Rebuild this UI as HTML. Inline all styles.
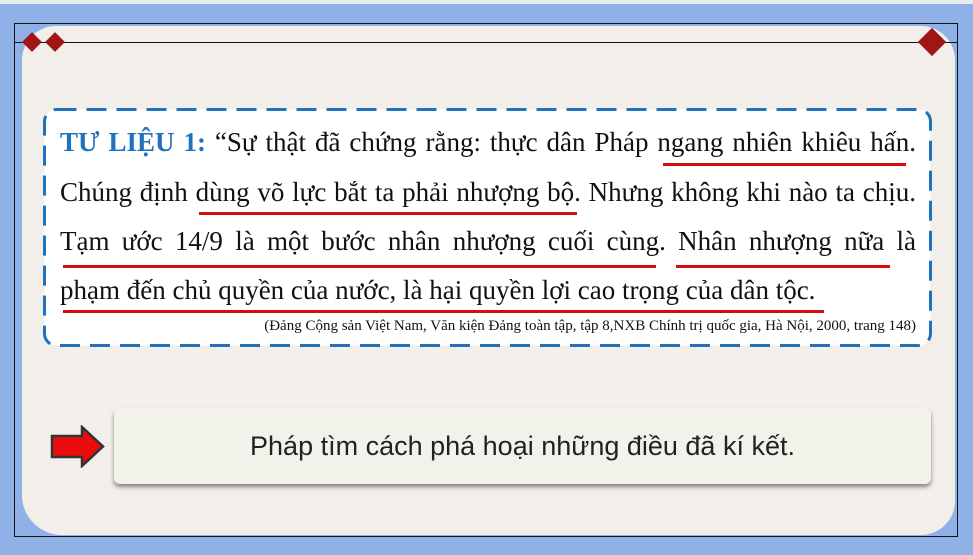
<!DOCTYPE html>
<html><head><meta charset="utf-8"><style>
body{margin:0;width:973px;height:555px;overflow:hidden;background:#8fb1e8;position:relative;font-family:"Liberation Serif",serif}
.top{position:absolute;left:0;top:0;width:973px;height:4px;background:#e9ecef}
.panel{position:absolute;left:22px;top:26px;width:933px;height:509px;background:#f2efeb;border-radius:34px 34px 34px 40px}
.frame{position:absolute;left:14px;top:23px;width:942px;height:512px;border:1px solid #111}
.hl{position:absolute;left:14px;top:42px;width:943px;height:1px;background:#111}
.d{position:absolute;background:#a01616;transform:rotate(45deg)}
.ln{position:absolute;left:60px;width:856px;font-size:27px;color:#111;white-space:nowrap;text-align:justify;text-align-last:justify;line-height:30px}
.u{position:absolute;height:3px;background:#d40d0d}
.cite{position:absolute;right:57px;top:318px;font-size:15px;color:#111;white-space:nowrap}
.ans{position:absolute;left:114px;top:408px;width:817px;height:76px;background:#f3f2ea;border-radius:6px;box-shadow:0 3px 4px rgba(0,0,0,.45);font-family:"Liberation Sans",sans-serif;font-size:27px;color:#222;text-align:center;line-height:76px}
</style></head><body>
<div class="top"></div>
<div class="panel"></div>
<div class="frame"></div>
<div class="hl"></div>
<div class="d" style="left:25px;top:35px;width:14px;height:14px"></div>
<div class="d" style="left:48px;top:35px;width:14px;height:14px"></div>
<div class="d" style="left:922px;top:32px;width:20px;height:20px"></div>
<svg style="position:absolute;left:43px;top:108px" width="890" height="240"><rect x="1.5" y="1.5" width="886" height="236" rx="12" fill="#fff" stroke="#1f72bb" stroke-width="3" stroke-dasharray="20 10"/></svg>
<div class="ln" style="top:127px"><b style="color:#1f72bb">TƯ LIỆU 1:</b> “Sự thật đã chứng rằng: thực dân Pháp ngang nhiên khiêu hấn.</div>
<div class="ln" style="top:177px">Chúng định dùng võ lực bắt ta phải nhượng bộ. Nhưng không khi nào ta chịu.</div>
<div class="ln" style="top:226px">Tạm ước 14/9 là một bước nhân nhượng cuối cùng. Nhân nhượng nữa là</div>
<div class="ln" style="top:275px;text-align-last:left">phạm đến chủ quyền của nước, là hại quyền lợi cao trọng của dân tộc.</div>
<div class="u" style="left:663px;top:163px;width:243px"></div>
<div class="u" style="left:199px;top:212px;width:378px"></div>
<div class="u" style="left:63px;top:265px;width:593px"></div>
<div class="u" style="left:676px;top:265px;width:214px"></div>
<div class="u" style="left:63px;top:310px;width:761px"></div>
<div class="cite">(Đảng Cộng sản Việt Nam, Văn kiện Đảng toàn tập, tập 8,NXB Chính trị quốc gia, Hà Nội, 2000, trang 148)</div>
<svg style="position:absolute;left:50px;top:425px" width="56" height="43"><path d="M2 11H32V2L53 21.5L32 41V32H2Z" fill="#e80c0c" stroke="#333" stroke-width="2.5"/></svg>
<div class="ans">Pháp tìm cách phá hoại những điều đã kí kết.</div>
</body></html>
